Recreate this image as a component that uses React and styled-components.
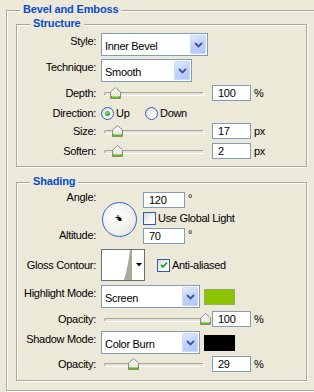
import React from "react";
import styled, { createGlobalStyle } from "styled-components";

const GlobalStyle = createGlobalStyle`
  html, body { margin: 0; padding: 0; background: #ECE9D8; overflow: hidden; }
  body {
    font-family: "Liberation Sans", Arial, sans-serif;
    font-size: 11px;
    letter-spacing: -0.3px;
    color: #000;
  }
  #root { width: 314px; height: 392px; overflow: hidden; }
`;

const Page = styled.div`
  width: 314px;
  height: 392px;
  box-sizing: border-box;
  padding-top: 10px;
  overflow: hidden;
`;

const Group = styled.section`
  box-sizing: border-box;
  display: flex;
  flex-direction: column;
  border: 1px solid #ACA899;
  box-shadow: inset 1px 1px 0 #fff, 1px 1px 0 #fff;
`;

const Outer = styled(Group)`
  margin-left: 6px;
  width: 330px;
  height: 381px;
`;

const Inner = styled(Group)`
  margin: ${(p) => p.$mt}px 0 0 9px;
  width: 291px;
  padding-bottom: ${(p) => p.$pb}px;
`;

const Title = styled.div`
  align-self: flex-start;
  margin: -8px 0 0 13px;
  padding: 0 3px;
  background: #ECE9D8;
  color: #0A4BD0;
  font-weight: bold;
  line-height: 13px;
  letter-spacing: -0.15px;
`;

const Body = styled.div`
  display: flex;
  flex-direction: column;
  padding-top: ${(p) => p.$pt}px;
`;

const Row = styled.div`
  display: grid;
  grid-template-columns: 79px 1fr;
  column-gap: 5px;
  align-items: center;
  height: ${(p) => p.$h}px;
  margin-top: ${(p) => p.$mt || 0}px;
`;

const Label = styled.div`
  text-align: right;
  white-space: nowrap;
  line-height: 13px;
  align-self: ${(p) => (p.$top ? "start" : "center")};
  margin-top: ${(p) => p.$top || 0}px;
`;

const Controls = styled.div`
  display: flex;
  align-items: center;
  height: 100%;
`;

const SelectBox = styled.div`
  box-sizing: border-box;
  width: ${(p) => p.$w}px;
  height: 23px;
  border: 1px solid #7F9DB9;
  background: #fff;
  display: flex;
  align-items: center;
  justify-content: space-between;
`;

const SelectText = styled.span`
  padding: 2px 0 0 3px;
  white-space: nowrap;
`;

const DropButton = styled.div`
  box-sizing: border-box;
  width: 16px;
  height: 19px;
  margin-right: 1px;
  border-radius: 1px;
  border: 1px solid #C9D8FB;
  background: linear-gradient(160deg, #E2EAFE 0%, #C3D4FB 45%, #B2C6F6 100%);
  display: flex;
  align-items: center;
  justify-content: center;
`;

const Field = styled.div`
  box-sizing: border-box;
  width: ${(p) => p.$w || 39}px;
  height: 16px;
  margin-left: ${(p) => p.$ml || 0}px;
  border: 1px solid #7F9DB9;
  background: #fff;
  padding-left: 5px;
  line-height: 14px;
`;

const Unit = styled.span`
  padding-left: 3px;
  align-self: ${(p) => (p.$sup ? "flex-start" : "center")};
  line-height: ${(p) => (p.$sup ? "12px" : "13px")};
`;

const SliderWrap = styled.div`
  position: relative;
  width: 106px;
  height: 16px;
  margin-left: 3px;
  display: flex;
  align-items: center;
`;

const Track = styled.div`
  box-sizing: border-box;
  width: 100px;
  height: 4px;
  margin-top: 2px;
  border-top: 1px solid #A7A69B;
  border-left: 1px solid #A7A69B;
  border-bottom: 1px solid #fff;
  border-right: 1px solid #fff;
  border-radius: 2px;
  background: #E4E3DA;
`;

const ThumbSvg = styled.svg`
  position: absolute;
  top: 2px;
  display: block;
`;

const RadioGroup = styled.div`
  display: grid;
  grid-template-columns: 44px auto;
  align-items: center;
`;

const Option = styled.label`
  display: flex;
  align-items: center;
  gap: 2px;
  white-space: nowrap;
  margin-left: ${(p) => p.$ml || 0}px;
`;

const RadioDot = styled.span`
  box-sizing: border-box;
  width: 13px;
  height: 13px;
  border-radius: 50%;
  border: 1px solid #2F5CB4;
  background: linear-gradient(135deg, #D8D7CF, #FFFFFF 75%);
  display: inline-flex;
  align-items: center;
  justify-content: center;
  &::after {
    content: "";
    width: 5px;
    height: 5px;
    border-radius: 50%;
    background: ${(p) => (p.$on ? "radial-gradient(circle at 40% 40%, #8FE08F, #21A121 70%)" : "transparent")};
  }
`;

const CheckBox = styled.span`
  box-sizing: border-box;
  width: 13px;
  height: 13px;
  border: 1px solid #2F5CB4;
  background: linear-gradient(135deg, #D8D7CF, #FFFFFF 75%);
  display: inline-flex;
  align-items: center;
  justify-content: center;
`;

const AngleBlock = styled.div`
  display: grid;
  grid-template-columns: 79px 37px 1fr;
  grid-template-rows: 16px 16px 16px;
  column-gap: 5px;
  row-gap: 2px;
`;

const AngleLabel = styled(Label)`
  grid-column: 1;
  grid-row: ${(p) => p.$row};
`;

const Dial = styled.div`
  grid-column: 2;
  grid-row: 1 / 4;
  align-self: start;
  justify-self: center;
  margin-top: 10px;
  box-sizing: border-box;
  width: 35px;
  height: 35px;
  border-radius: 50%;
  border: 1px solid #3463C8;
  background: radial-gradient(circle at 40% 38%, #FFFFFF 0%, #F1F0EA 55%, #DCDBD1 100%);
  display: flex;
  align-items: center;
  justify-content: center;
`;

const AngleCell = styled.div`
  grid-column: 3;
  grid-row: ${(p) => p.$row};
  display: flex;
  align-items: center;
`;

const ContourBox = styled.div`
  box-sizing: border-box;
  display: flex;
  width: 44px;
  height: 32px;
  border: 1px solid #6E6E6E;
  background: #fff;
`;

const ContourPreview = styled.svg`
  display: block;
  width: 31px;
  height: 30px;
`;

const ContourArrow = styled.div`
  flex: 1;
  display: flex;
  align-items: center;
  justify-content: center;
`;

const Swatch = styled.div`
  box-sizing: border-box;
  width: 31px;
  height: 16px;
  margin-left: 4px;
  background: ${(p) => p.$c};
  border: 1px ${(p) => (p.$dashed ? "dashed" : "solid")} ${(p) => p.$b};
`;

const Chevron = () => (
  <svg width="9" height="6" viewBox="0 0 9 6">
    <polyline points="1,1 4.5,4.5 8,1" fill="none" stroke="#3A5699" strokeWidth="1.8" />
  </svg>
);

const Select = ({ w, children }) => (
  <SelectBox $w={w}>
    <SelectText>{children}</SelectText>
    <DropButton>
      <Chevron />
    </DropButton>
  </SelectBox>
);

const Thumb = ({ x }) => (
  <ThumbSvg width="11" height="12" viewBox="0 0 11 12" style={{ left: x }}>
    <defs>
      <linearGradient id="thg" x1="0" y1="0" x2="0" y2="1">
        <stop offset="0" stopColor="#FFFFFF" />
        <stop offset="1" stopColor="#E2E0D6" />
      </linearGradient>
    </defs>
    <polygon points="0.5,5 5.5,0.5 10.5,5 10.5,11.5 0.5,11.5" fill="url(#thg)" stroke="#8C8B80" />
    <rect x="1" y="9" width="9" height="2" fill="#5DBA1E" />
    <rect x="2" y="9" width="7" height="1" fill="#A9E05A" />
  </ThumbSvg>
);

const Slider = ({ x }) => (
  <SliderWrap>
    <Track />
    <Thumb x={x} />
  </SliderWrap>
);

const Check = () => (
  <svg width="8" height="8" viewBox="0 0 8 8">
    <polyline points="1,3.8 3,6 7,1.5" fill="none" stroke="#21A121" strokeWidth="1.8" />
  </svg>
);

const SliderRow = ({ label, x, value, unit, h = 16, mt }) => (
  <Row $h={h} $mt={mt}>
    <Label>{label}</Label>
    <Controls>
      <Slider x={x} />
      <Field $ml={2}>{value}</Field>
      <Unit>{unit}</Unit>
    </Controls>
  </Row>
);

export default function App() {
  return (
    <>
      <GlobalStyle />
      <Page>
        <Outer>
          <Title>Bevel and Emboss</Title>
          <Inner $mt={8} $pb={7}>
            <Title>Structure</Title>
            <Body $pt={3}>
              <Row $h={23}>
                <Label $top={2}>Style:</Label>
                <Controls>
                  <Select w={107}>Inner Bevel</Select>
                </Controls>
              </Row>
              <Row $h={23} $mt={3}>
                <Label $top={2}>Technique:</Label>
                <Controls>
                  <Select w={91}>Smooth</Select>
                </Controls>
              </Row>
              <SliderRow label="Depth:" x={6} value="100" unit="%" mt={3} />
              <Row $h={18} $mt={3}>
                <Label>Direction:</Label>
                <RadioGroup>
                  <Option>
                    <RadioDot $on />
                    Up
                  </Option>
                  <Option>
                    <RadioDot />
                    Down
                  </Option>
                </RadioGroup>
              </Row>
              <SliderRow label="Size:" x={8} value="17" unit="px" mt={1} />
              <SliderRow label="Soften:" x={8} value="2" unit="px" mt={4} />
            </Body>
          </Inner>

          <Inner $mt={15} $pb={8}>
            <Title>Shading</Title>
            <Body $pt={4}>
              <AngleBlock>
                <AngleLabel $row={1} $top={-1}>Angle:</AngleLabel>
                <Dial>
                  <svg width="12" height="12" viewBox="0 0 12 12">
                    <line x1="4" y1="1" x2="4" y2="6" stroke="#000" strokeWidth="1" />
                    <line x1="1.5" y1="3.5" x2="6.5" y2="3.5" stroke="#000" strokeWidth="1" />
                    <rect x="4.5" y="4" width="3" height="3" fill="#000" />
                  </svg>
                </Dial>
                <AngleCell $row={1}>
                  <Field $w={42}>120</Field>
                  <Unit $sup>°</Unit>
                </AngleCell>
                <AngleCell $row={2}>
                  <Option>
                    <CheckBox />
                    Use Global Light
                  </Option>
                </AngleCell>
                <AngleLabel $row={3} $top={1}>Altitude:</AngleLabel>
                <AngleCell $row={3}>
                  <Field $w={42}>70</Field>
                  <Unit $sup>°</Unit>
                </AngleCell>
              </AngleBlock>

              <Row $h={32} $mt={5}>
                <Label>Gloss Contour:</Label>
                <Controls>
                  <ContourBox>
                    <ContourPreview viewBox="0 0 31 30">
                      <path d="M22 30 Q26.5 14 28 0 L30 0 L30 30 Z" fill="#ABA99C" />
                    </ContourPreview>
                    <ContourArrow>
                      <svg width="6" height="4" viewBox="0 0 6 4">
                        <polygon points="0,0 6,0 3,3.5" fill="#000" />
                      </svg>
                    </ContourArrow>
                  </ContourBox>
                  <Option $ml={12}>
                    <CheckBox>
                      <Check />
                    </CheckBox>
                    Anti-aliased
                  </Option>
                </Controls>
              </Row>

              <Row $h={23} $mt={4}>
                <Label $top={2}>Highlight Mode:</Label>
                <Controls>
                  <Select w={99}>Screen</Select>
                  <Swatch $c="#8CC300" $b="#9E9E90" $dashed />
                </Controls>
              </Row>
              <SliderRow label="Opacity:" x={96} value="100" unit="%" mt={3} />
              <Row $h={23} $mt={4}>
                <Label $top={2}>Shadow Mode:</Label>
                <Controls>
                  <Select w={99}>Color Burn</Select>
                  <Swatch $c="#000" $b="#000" />
                </Controls>
              </Row>
              <SliderRow label="Opacity:" x={24} value="29" unit="%" mt={2} />
            </Body>
          </Inner>
        </Outer>
      </Page>
    </>
  );
}
